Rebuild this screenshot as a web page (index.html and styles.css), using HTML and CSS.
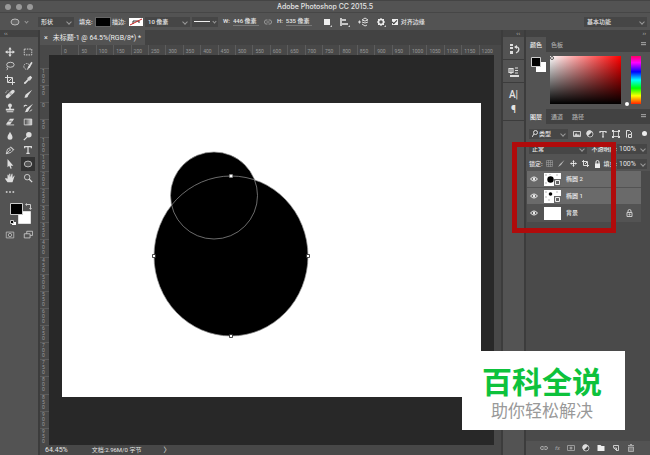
FILE: index.html
```
<!DOCTYPE html>
<html lang="zh-CN">
<head>
<meta charset="utf-8">
<meta name="viewport" content="width=device-width, initial-scale=1">
<title>Adobe Photoshop CC 2015.5</title>
<link rel="stylesheet" href="styles.css">
</head>
<body>

<header class="titlebar">
  <div class="lights"><i></i><i></i><i></i></div>
  <h1>Adobe Photoshop CC 2015.5</h1>
</header>

<div class="options">
  <button class="shape-btn" aria-label="椭圆工具">
    <svg width="10" height="8" viewBox="0 0 10 8"><ellipse cx="5" cy="4" rx="4" ry="3" fill="#666" stroke="#bbb"/></svg>
    <span class="chev"></span>
  </button>
  <span class="pick mode"><select aria-label="模式"><option>形状</option></select></span>
  <span class="opt-label fill-label">填充:</span>
  <button class="swatch black" aria-label="填充颜色"></button>
  <span class="opt-label stroke-label">描边:</span>
  <button class="swatch none" aria-label="描边颜色">
    <svg width="14" height="8" viewBox="0 0 14 8"><path d="M4 6V3h6v2" fill="none" stroke="#333"/><path d="M1 7 13 1" stroke="#c22"/></svg>
  </button>
  <span class="pick size"><select aria-label="描边宽度"><option>10 像素</option></select></span>
  <button class="line-btn" aria-label="描边类型"><i></i><span class="chev"></span></button>
  <label class="dim">W: <input type="text" value="446 像素"></label>
  <svg class="chain" width="8" height="6" viewBox="0 0 8 6"><path d="M3.500 1H2a1.500 2 0 0 0 0 4h1.500M4.500 1H6a1.500 2 0 0 1 0 4H4.500M2.500 3h3" fill="none" stroke="#999"/></svg>
  <label class="dim">H: <input type="text" value="535 像素"></label>
  <div class="ops">
    <button aria-label="路径操作"><svg width="10" height="10" viewBox="0 0 10 10"><path d="M2 2h6v6H2z" fill="#eee"/><path d="M10 8v2H8z" fill="#ccc"/></svg></button>
    <button aria-label="路径对齐"><svg width="10" height="10" viewBox="0 0 10 10"><path d="M1 1v8M2 3h4M2 7h6" fill="none" stroke="#eee" stroke-width="1.500"/><path d="M10 8v2H8z" fill="#ccc"/></svg></button>
    <button aria-label="路径排列"><svg width="10" height="10" viewBox="0 0 10 10"><path d="M0 5h3M1.500 3.500v3M4 3l3-2 3 2-3 1zM4 5l3 1 3-1M4 7l3 2 2-1" fill="none" stroke="#ddd"/></svg></button>
    <button aria-label="设置"><svg width="10" height="10" viewBox="0 0 10 10"><circle cx="5" cy="5" r="2.500" fill="none" stroke="#eee" stroke-width="1.500"/><path d="M5 1v1M5 8v1M1 5h1M8 5h1M2 2l1 1M7 7l1 1M8 2 7 3M2 8l1-1" stroke="#eee"/><path d="M10 8v2H8z" fill="#ccc"/></svg></button>
  </div>
  <label class="check"><input type="checkbox" checked> 对齐边缘</label>
  <span class="pick workspace-pick"><select aria-label="工作区"><option>基本功能</option></select></span>
</div>

<div class="main">
  <aside class="tools">
    <div class="strip">‹‹</div>
    <div class="tool-grid">
      <button aria-label="移动"><svg viewBox="0 0 12 12"><path d="M6 2v8M2 6h8" stroke="#ddd" stroke-width="1.500"/><path d="M6 0l2 3H4zM6 12l2-3H4zM0 6l3-2v4zM12 6L9 4v4z" fill="#ddd"/></svg></button>
      <button aria-label="矩形选框"><svg viewBox="0 0 12 12"><path d="M1.500 2.500h9v7h-9z" fill="none" stroke="#ddd" stroke-dasharray="2 1"/></svg></button>
      <button aria-label="套索"><svg viewBox="0 0 12 12"><ellipse cx="6.500" cy="4.500" rx="4.500" ry="3" fill="none" stroke="#ddd"/><path d="M3 6.500c-2 1 0 2 0 2s0 2-1 2.500" fill="none" stroke="#ddd"/></svg></button>
      <button aria-label="快速选择"><svg viewBox="0 0 12 12"><circle cx="4.500" cy="6.500" r="3.500" fill="none" stroke="#ddd" stroke-dasharray="2 1"/><path d="M11.500 2 8 8l-3 2 1-3 4-6z" fill="#ddd"/></svg></button>
      <button aria-label="裁剪"><svg viewBox="0 0 12 12"><path d="M3 0v9h9M0 3h9v9M4 8l4-4" fill="none" stroke="#ddd" stroke-width="1.200"/></svg></button>
      <button aria-label="吸管"><svg viewBox="0 0 12 12"><path d="M7 5 2 10" stroke="#ddd" stroke-width="2"/><path d="M6 3l3 3 2-3-2-2zM1 11l1-3 1 2z" fill="#ddd"/><path d="M5.500 3.500l3 3" stroke="#ddd" stroke-width="1.500"/></svg></button>
      <button aria-label="修复画笔"><svg viewBox="0 0 12 12"><path d="M3 9 9.500 3" stroke="#ddd" stroke-width="4" stroke-linecap="round"/><path d="M4.500 5 8 8M5.500 4 9 7" stroke="#555" stroke-width=".6"/><path d="M1 5c0-2 1-3 3-3" fill="none" stroke="#ddd" stroke-dasharray="1 1"/></svg></button>
      <button aria-label="画笔"><svg viewBox="0 0 12 12"><path d="M11 1 6 8 4 6zM4 6l2 2c0 2-2 3-5 2 2 0 1-3 3-4z" fill="#ddd"/></svg></button>
      <button aria-label="仿制图章"><svg viewBox="0 0 12 12"><circle cx="6" cy="3" r="2.300" fill="#ddd"/><path d="M5 4h2v3h4v2H1V7h4zM2 10h8v1H2z" fill="#ddd"/></svg></button>
      <button aria-label="历史记录画笔"><svg viewBox="0 0 12 12"><path d="M12 1 7 8 5 6zM5 6l2 2c0 2-2 3-5 3 2-1 1-4 3-5z" fill="#ddd"/><path d="M1 3h4M1 5l2-3M8 10l3-2" fill="none" stroke="#ddd"/></svg></button>
      <button aria-label="橡皮擦"><svg viewBox="0 0 12 12"><path d="M6 2h5L6 9H1z" fill="#ddd"/><path d="M4 5h4" stroke="#555"/><path d="M2 9.500h9" stroke="#ddd"/></svg></button>
      <button aria-label="渐变"><svg viewBox="0 0 12 12"><defs><linearGradient id="ramp"><stop stop-color="#444"/><stop offset="1" stop-color="#ddd"/></linearGradient></defs><path d="M1.500 2.500h9v7h-9z" fill="url(#ramp)" stroke="#ddd"/></svg></button>
      <button aria-label="模糊"><svg viewBox="0 0 12 12"><path d="M6 1c1 3 3 4 3 6.500a3 3 0 0 1-6 0C3 5 5 4 6 1z" fill="#ddd"/></svg></button>
      <button aria-label="减淡"><svg viewBox="0 0 12 12"><circle cx="7" cy="4.500" r="3.300" fill="#ddd"/><path d="M5 7l-4 4" stroke="#ddd" stroke-width="1.500"/></svg></button>
      <button aria-label="钢笔"><svg viewBox="0 0 12 12"><path d="M1.500 10.500 3 5l4-2 3 3-3 3zM1.500 10.500 5.500 6.500M7 2l4 4" fill="none" stroke="#ddd"/><circle cx="6" cy="6" r="1" fill="#ddd"/></svg></button>
      <button aria-label="文字"><svg viewBox="0 0 12 12"><path d="M2 4V2h8v2M6 2v8M4 10h4" fill="none" stroke="#ddd" stroke-width="1.500"/></svg></button>
      <button aria-label="路径选择"><svg viewBox="0 0 12 12"><path d="M3 0v10l2-2 2 4 1-1-1-3h3z" fill="#ddd"/></svg></button>
      <button class="on" aria-label="椭圆"><svg viewBox="0 0 12 12"><ellipse cx="6" cy="6" rx="4.500" ry="3.500" fill="#555" stroke="#ccc"/></svg></button>
      <button aria-label="抓手"><svg viewBox="0 0 12 12"><path d="M3 11 0 7l1-1 2 1V2h1.300l.7 3V1h1.300l.2 4L8 1h1v5l2-3 .5.500L10 8l-1 3z" fill="#ddd"/></svg></button>
      <button aria-label="缩放"><svg viewBox="0 0 12 12"><circle cx="5" cy="5" r="3.300" fill="none" stroke="#ddd"/><path d="M7.500 7.500 11 11" stroke="#ddd" stroke-width="1.500"/></svg></button>
      <button aria-label="更多"><svg viewBox="0 0 12 12"><path d="M1 5h2v2H1zM5 5h2v2H5zM9 5h2v2H9z" fill="#ddd"/></svg></button>
    </div>
    <svg class="fgbg" width="26" height="26" viewBox="0 0 26 26">
      <path d="M10.500 9.500h12v12h-12z" fill="#fff" stroke="#ddd"/>
      <path d="M2.500 1.500h12v11h-12z" fill="#000" stroke="#ccc"/>
      <path d="M19 2.500h3.500V6" fill="none" stroke="#ccc"/><path d="M19 1v3l-2-1.500zM21 6h3l-1.500 2z" fill="#ccc"/>
      <path d="M4 20h4v3H4z" fill="#fff"/><path d="M2.500 18.500h3v3h-3z" fill="#000" stroke="#ccc"/>
    </svg>
    <div class="tool-grid">
      <button aria-label="快速蒙版"><svg viewBox="0 0 12 12"><path d="M1.500 2.500h9v7h-9z" fill="none" stroke="#bbb"/><circle cx="6" cy="6" r="2" fill="none" stroke="#bbb"/></svg></button>
      <button aria-label="屏幕模式"><svg viewBox="0 0 12 12"><path d="M4.500 1.500h7v5h-7z" fill="none" stroke="#ccc"/><path d="M1.500 4.500h7v5h-7z" fill="#535353" stroke="#ccc"/></svg></button>
    </div>
  </aside>

  <section class="document">
    <div class="tabs doc-tabs">
      <button class="on"><span class="close">×</span>未标题-1 @ 64.5%(RGB/8*) *</button>
    </div>
    <div class="ruler-x" id="rulerX"></div>
    <div class="stage">
      <div class="ruler-y" id="rulerY"></div>
      <div class="canvas">
        <svg viewBox="0 0 419 294" preserveAspectRatio="none">
          <rect width="419" height="294" fill="#fff"/>
          <circle cx="152" cy="92.500" r="43.500"/>
          <ellipse cx="169" cy="153" rx="77" ry="80"/>
          <g fill="none" stroke="#999" stroke-width=".7">
            <circle cx="152" cy="92.500" r="43.500"/>
            <ellipse cx="169" cy="153" rx="77" ry="80"/>
          </g>
          <path d="M167.500 71.500h3v3h-3z" fill="#fff" stroke="#888" stroke-width=".5"/>
          <g fill="#fff" stroke="#222" stroke-width=".8"><path d="M90.500 151.500h3v3h-3zM244.500 151.500h3v3h-3zM167.500 231.500h3v3h-3z"/></g>
        </svg>
      </div>
      <div class="scroll"></div>
    </div>
    <footer class="status"><span>64.45%</span><span class="doc-size">文档:2.96M/0 字节</span><span>〉</span></footer>
  </section>

  <aside class="dock">
    <div class="strip right">‹‹</div>
    <div class="dock-group"><button aria-label="历史记录"><svg width="12" height="12" viewBox="0 0 12 12"><path d="M2 1h3v2H2zM2 4h3v2H2zM2 8h3v3H2z" fill="#ddd"/><path d="M7 4h2c3 1 2 5-1 6" fill="none" stroke="#ddd" stroke-width="1.300"/><path d="M9 2v4L6 4z" fill="#ddd"/></svg></button></div>
    <div class="dock-group"><button aria-label="属性"><svg width="12" height="12" viewBox="0 0 12 12"><path d="M1 2.500h4v4H1zM3 2v6M7 2h3M7 4.500h3M7 7h3" fill="none" stroke="#ddd" stroke-width="1.200"/><path d="M2 9h9v2H2z" fill="#ddd"/></svg></button></div>
    <div class="dock-group"><button>A|</button><button>¶</button></div>
  </aside>

  <aside class="panels">
    <div class="strip right">››</div>
    <div class="tabs">
      <button class="on">颜色</button><button>色板</button>
      <span class="menu"></span>
    </div>
    <div class="color">
      <svg width="15" height="17" viewBox="0 0 15 17"><path d="M5 6h10v10H5z" fill="#fff"/><path d="M.5 1.500h9v9h-9z" fill="#000" stroke="#ccc"/></svg>
      <div class="field"><i></i></div>
      <div class="hue"><i></i></div>
    </div>
    <div class="tabs">
      <button class="on">图层</button><button>通道</button><button>路径</button>
      <span class="menu"></span>
    </div>
    <div class="layers">
      <div class="row filter">
        <span class="pick kind">
          <svg width="6" height="7" viewBox="0 0 6 7"><circle cx="3.500" cy="2.500" r="2" fill="none" stroke="#ddd"/><path d="M2 4 0 7" stroke="#ddd"/></svg>
          <select aria-label="筛选"><option>类型</option></select>
        </span>
        <button aria-label="像素"><svg width="8" height="8" viewBox="0 0 8 8"><path d="M.5 1.500h7v5h-7z" fill="none" stroke="#ccc"/><path d="M1 6l2-3 2 2 1-1 1 2z" fill="#ccc"/></svg></button>
        <button aria-label="调整"><svg width="8" height="8" viewBox="0 0 8 8"><circle cx="4" cy="4" r="3" fill="#444" stroke="#ddd" stroke-width=".8"/><path d="M2 6a3 3 0 1 1 4-4z" fill="#ddd"/></svg></button>
        <button aria-label="文字"><svg width="8" height="8" viewBox="0 0 8 8"><path d="M1 3V1.500h6V3M4 1v6M3 7h2" fill="none" stroke="#ddd" stroke-width="1.200"/></svg></button>
        <button aria-label="形状"><svg width="8" height="8" viewBox="0 0 8 8"><path d="M1.500 1.500h5v5h-5z" fill="none" stroke="#ccc"/><path d="M0 0h2v2H0zM6 0h2v2H6zM0 6h2v2H0zM6 6h2v2H6z" fill="#ddd"/></svg></button>
        <button aria-label="智能对象"><svg width="8" height="8" viewBox="0 0 8 8"><path d="M1.500 7.500v-7h3l2 2v2" fill="none" stroke="#ddd"/><path d="M3.500 4.500h3v3h-3z" fill="#555" stroke="#ddd"/></svg></button>
        <i class="dot"></i>
      </div>
      <div class="row">
        <span class="pick blend"><select aria-label="混合模式"><option>正常</option></select></span>
        <label class="percent" for="opacity">不透明度:</label>
        <span class="pick num"><select id="opacity"><option>100%</option></select></span>
      </div>
      <div class="row">
        <span class="lock-label">锁定:</span>
        <div class="locks">
          <button aria-label="锁定透明像素"><svg width="7" height="7" viewBox="0 0 7 7"><path d="M.5.500h6v6h-6zM2.500 0v7M4.500 0v7M0 2.500h7M0 4.500h7" fill="none" stroke="#999" stroke-width=".6"/></svg></button>
          <button aria-label="锁定图像像素"><svg width="7" height="7" viewBox="0 0 7 7"><path d="M6.500 0 3 5 2 4zM2 4l1 1-3 2z" fill="#bbb"/></svg></button>
          <button aria-label="锁定位置"><svg width="7" height="7" viewBox="0 0 12 12"><path d="M6 2v8M2 6h8" stroke="#eee" stroke-width="1.500"/><path d="M6 0l2 3H4zM6 12l2-3H4zM0 6l3-2v4zM12 6L9 4v4z" fill="#eee"/></svg></button>
          <button aria-label="锁定画板"><svg width="7" height="7" viewBox="0 0 7 7"><path d="M0 1.500h5.500V7M1.500 0v5.500H7M3 4l2-2" fill="none" stroke="#ddd"/></svg></button>
          <button aria-label="全部锁定"><svg width="7" height="8" viewBox="0 0 7 8"><path d="M2 4V2a1.500 1.500 0 0 1 3 0v2" fill="none" stroke="#eee"/><path d="M1 3.500h5V8H1z" fill="#eee"/></svg></button>
        </div>
        <label class="percent" for="fill">填充:</label>
        <span class="pick num"><select id="fill"><option>100%</option></select></span>
      </div>
      <ul class="list">
        <li class="on">
          <button class="eye" aria-label="显示"><svg width="8" height="6" viewBox="0 0 8 6"><path d="M.5 3q3.500-4 7 0-3.500 4-7 0z" fill="none" stroke="#eee"/><circle cx="4" cy="3" r="1.200" fill="#eee"/></svg></button>
          <svg class="thumb" width="17" height="13" viewBox="0 0 17 13"><rect width="17" height="13" fill="#fff"/><path d="M1 1h2v2H1zM5 1h2v1H5zM1 9h2v2H1zM12 1h2v2h-2z" fill="#ddd"/><circle cx="6.500" cy="6.500" r="3.200"/><path d="M10 6h7v7h-7z" fill="#666"/><path d="M11.500 7.500h4v4h-4z" fill="none" stroke="#eee"/></svg>
          <span>椭圆 2</span>
        </li>
        <li class="on">
          <button class="eye" aria-label="显示"><svg width="8" height="6" viewBox="0 0 8 6"><path d="M.5 3q3.500-4 7 0-3.500 4-7 0z" fill="none" stroke="#eee"/><circle cx="4" cy="3" r="1.200" fill="#eee"/></svg></button>
          <svg class="thumb" width="17" height="13" viewBox="0 0 17 13"><rect width="17" height="13" fill="#fff"/><path d="M1 1h2v2H1zM1 6h2v2H1zM4 9h2v2H4zM12 1h2v2h-2z" fill="#ddd"/><circle cx="6.500" cy="4" r="1.800"/><path d="M10 6h7v7h-7z" fill="#666"/><path d="M11.500 7.500h4v4h-4z" fill="none" stroke="#eee"/></svg>
          <span>椭圆 1</span>
        </li>
        <li>
          <button class="eye" aria-label="显示"><svg width="8" height="6" viewBox="0 0 8 6"><path d="M.5 3q3.500-4 7 0-3.500 4-7 0z" fill="none" stroke="#eee"/><circle cx="4" cy="3" r="1.200" fill="#eee"/></svg></button>
          <svg class="thumb" width="17" height="13" viewBox="0 0 17 13"><rect width="17" height="13" fill="#fff"/></svg>
          <span>背景</span>
          <svg class="locked" width="7" height="8" viewBox="0 0 7 8"><path d="M2 3V2a1.500 1.500 0 0 1 3 0v1M1 3.500h5v4H1zM3 5h1v1H3z" fill="none" stroke="#ccc"/></svg>
        </li>
      </ul>
      <div class="actions">
        <button aria-label="链接图层"><svg width="8" height="8" viewBox="0 0 8 8"><path d="M3.500 2.500H2a1.500 1.500 0 0 0 0 3h1.500M4.500 2.500H6a1.500 1.500 0 0 1 0 3H4.500M2.500 4h3" fill="none" stroke="#bbb" stroke-width=".8"/></svg></button>
        <button class="fx">fx</button>
        <button aria-label="蒙版"><svg width="8" height="8" viewBox="0 0 8 8"><path d="M.5 1.500h7v5h-7z" fill="none" stroke="#999"/><circle cx="4" cy="4" r="1.500" fill="#999"/></svg></button>
        <button aria-label="调整图层"><svg width="8" height="8" viewBox="0 0 8 8"><circle cx="4" cy="4" r="3" fill="#444" stroke="#ddd" stroke-width=".8"/><path d="M2 6a3 3 0 1 1 4-4z" fill="#ddd"/></svg></button>
        <button aria-label="新建组"><svg width="8" height="8" viewBox="0 0 8 8"><path d="M.500 1h3l1 1h3v5h-7z" fill="#eee"/></svg></button>
        <button aria-label="新建图层"><svg width="8" height="8" viewBox="0 0 8 8"><path d="M1.500 1.500h5v5h-2l-3-3zM1.500 4h3v3" fill="none" stroke="#ccc"/></svg></button>
        <button aria-label="删除"><svg width="8" height="8" viewBox="0 0 8 8"><path d="M1 1.500h6M3 .5h2M1.500 3h5v4.500h-5zM3 3v4M5 3v4" fill="none" stroke="#bbb" stroke-width=".8"/></svg></button>
      </div>
    </div>
  </aside>
</div>

<div class="highlight"></div>
<div class="banner">
  <strong>百科全说</strong>
  <span>助你轻松解决</span>
</div>

<script src="rulers.js"></script>
</body>
</html>
```
FILE: styles.css
```
* {
  box-sizing: border-box;
}

body {
  margin: 0;
  height: 100vh;
  display: flex;
  flex-direction: column;
  overflow: hidden;
  position: relative;
  background: #535353;
  color: #e4e4e4;
  font: 500 6px/8px Roboto, "Noto Sans CJK SC", sans-serif;
}

button, select, input {
  margin: 0;
  padding: 0;
  border: 0;
  border-radius: 0;
  background: none;
  color: inherit;
  font: inherit;
  appearance: none;
}

svg {
  display: block;
}

/* title bar */
.titlebar {
  height: 13px;
  display: grid;
  grid-template-columns: 1fr auto 1fr;
  align-items: center;
  padding: 0 5px;
  border-top: 1px solid #444;
  border-bottom: 1px solid #464646;
}

.titlebar h1 {
  margin: 0;
  font-family: Inter, sans-serif;
  font-size: 7px;
  line-height: 10px;
  font-weight: 500;
}

.lights {
  display: flex;
  gap: 5px;
}

.lights i {
  width: 6px;
  height: 6px;
  border-radius: 50%;
  background: #999;
}

/* options bar */
.options {
  height: 17px;
  display: flex;
  align-items: center;
  padding: 0 3px 0 10px;
}

.shape-btn, .line-btn {
  display: flex;
  align-items: center;
  gap: 5px;
}

.shape-btn {
  width: 28px;
}

.chev, .pick::after {
  content: "";
  flex: none;
  width: 3px;
  height: 3px;
  border: solid #999;
  border-width: 0 1px 1px 0;
  rotate: 45deg;
}

.pick {
  display: flex;
  align-items: center;
  height: 10px;
  padding: 0 3px;
  background: #464646;
}

.pick select {
  flex: 1;
  min-width: 0;
}

.mode {
  width: 36px;
}

.opt-label {
  width: 17px;
  margin-left: 5px;
}

.stroke-label {
  margin-left: 2px;
}

.swatch {
  width: 14px;
  height: 8px;
  background: #fff;
}

.swatch.black {
  background: #000;
  outline: 1px solid #666;
}

.size {
  width: 45px;
  margin-left: 2px;
}

.line-btn {
  width: 26px;
  height: 10px;
  margin-left: 2px;
  padding: 0 2px;
  gap: 3px;
  background: #464646;
}

.line-btn i {
  flex: 1;
  height: 1px;
  background: #eee;
}

.dim {
  display: flex;
  gap: 3px;
  margin-left: 5px;
}

.dim input {
  width: 26px;
  border-bottom: 1px solid #777;
}

.chain {
  margin-left: 5px;
}

.ops {
  display: flex;
  gap: 8px;
  margin: 0 6px 0 10px;
}

.check {
  display: flex;
  align-items: center;
  gap: 3px;
}

.check input {
  width: 6px;
  height: 6px;
  background: #eee;
  display: grid;
  place-items: center;
}

.check input:checked::after {
  content: "";
  width: 2px;
  height: 4px;
  border: solid #333;
  border-width: 0 1px 1px 0;
  rotate: 45deg;
}

.workspace-pick {
  width: 63px;
  margin-left: auto;
}

/* columns */
.main {
  flex: 1;
  min-height: 0;
  display: flex;
  background: #3c3c3c;
  gap: 2px;
}

.strip {
  height: 7px;
  padding: 0 4px;
  background: #424242;
  color: #aaa;
  line-height: 6px;
}

.strip.right {
  text-align: right;
}

.tools {
  width: 38px;
  background: #535353;
}

.tool-grid {
  display: grid;
  grid-template-columns: 14px 14px;
  grid-auto-rows: 14px;
  column-gap: 4px;
  padding: 8px 0 0 3px;
}

.tool-grid button {
  display: grid;
  place-items: center;
}

.tool-grid button.on {
  background: #333;
}

.tool-grid svg {
  width: 10px;
  height: 10px;
}

.fgbg {
  margin: 3px 0 0 8px;
}

.fgbg + .tool-grid {
  padding-top: 0;
}

.tabs {
  display: flex;
  align-items: stretch;
  height: 15px;
  background: #424242;
}

.tabs button {
  padding: 0 4px;
  margin-right: 1px;
  color: #aaa;
}

.tabs button.on {
  background: #535353;
  color: #eee;
}

.menu {
  width: 5px;
  height: 4px;
  margin: 5px 4px 0 auto;
  background: repeating-linear-gradient(#999 0 1px, #535353 1px 2px);
}

/* document */
.document {
  flex: 1;
  min-width: 0;
  display: flex;
  flex-direction: column;
}

.doc-tabs button {
  font-size: 7px;
  font-weight: 400;
}

.close {
  margin-right: 5px;
}

.ruler-x {
  height: 10px;
  display: grid;
  grid-auto-flow: column;
  grid-auto-columns: 1fr;
  padding: 0 5px 0 21px;
  background: #484848;
  font-size: 5px;
  font-weight: 400;
  line-height: 12px;
  color: #999;
}

.ruler-x span {
  border-left: 1px solid #5c5c5c;
  padding-left: 2px;
  min-width: 0;
}

.stage {
  flex: 1;
  min-height: 0;
  display: flex;
}

.ruler-y {
  width: 9px;
  display: grid;
  grid-auto-rows: 1fr;
  padding-top: 13px;
  background: #484848;
  overflow: hidden;
  font-size: 5px;
  font-weight: 400;
  line-height: 5px;
  color: #999;
}

.ruler-y span {
  border-top: 1px solid #5c5c5c;
  padding: 0 4px 0 2px;
  min-height: 0;
  overflow: hidden;
  word-break: break-all;
}

.canvas {
  flex: 1;
  min-width: 0;
  padding: 48px 13px;
  background: #282828;
}

.canvas svg {
  width: 100%;
  height: 100%;
}

.scroll {
  width: 7px;
  background: #484848;
}

.status {
  height: 10px;
  display: flex;
  align-items: center;
  padding-left: 5px;
  background: #484848;
  font-size: 7px;
  font-weight: 400;
}

.doc-size {
  margin: 0 22px 0 24px;
  font-size: 6px;
}

/* right hand side */
.dock {
  width: 21px;
  background: #535353;
}

.dock-group {
  display: grid;
  justify-items: center;
  gap: 3px;
  padding: 6px 0 4px;
  border-bottom: 1px solid #3c3c3c;
}

.dock-group button {
  font-size: 10px;
  line-height: 12px;
}

.panels {
  width: 124px;
  display: flex;
  flex-direction: column;
  background: #535353;
}

.color {
  display: flex;
  height: 57px;
  padding: 4px 9px 5px 5px;
}

.field {
  flex: 1;
  margin: 0 10px 0 4px;
  background: linear-gradient(transparent, #000), linear-gradient(to right, #fff, #f00);
}

.field i {
  display: block;
  width: 4px;
  height: 4px;
  border: 1px solid #555;
  border-radius: 50%;
}

.hue {
  position: relative;
  width: 10px;
  background: linear-gradient(#f06, #f0f 14%, #00f 33%, #0ff 50%, #0f0 67%, #ff0 83%, #f20);
}

.hue i {
  position: absolute;
  left: -6px;
  bottom: -2px;
  width: 4px;
  height: 4px;
  border-radius: 50%;
  background: #fff;
}

.layers {
  flex: 1;
  display: flex;
  flex-direction: column;
  padding-top: 2px;
}

.row {
  display: flex;
  align-items: center;
  height: 15px;
  padding: 0 3px;
}

.filter {
  gap: 5px;
}

.kind {
  width: 39px;
  gap: 1px;
}

.dot {
  width: 5px;
  height: 5px;
  margin-left: auto;
  border-radius: 50%;
  background: #eee;
}

.blend {
  width: 58px;
}

.percent {
  margin-left: auto;
}

.num {
  width: 30px;
  padding: 0 2px;
}

.num select {
  font-size: 7px;
  font-weight: 400;
}

.locks {
  display: flex;
  gap: 5px;
  margin-left: 3px;
}

.list {
  flex: 1;
  margin: 0;
  padding: 0 9px 0 1px;
  list-style: none;
  background: #4a4a4a;
}

.list li {
  display: flex;
  align-items: center;
  height: 17px;
  padding: 0 8px 0 3px;
  border-bottom: 1px solid #535353;
  background: #535353;
}

.list li.on {
  background: #6a6a6a;
}

.thumb {
  margin: 0 5px 0 6px;
}

.locked {
  margin-left: auto;
}

.actions {
  display: flex;
  justify-content: space-between;
  align-items: center;
  height: 14px;
  padding: 0 15px 0 14px;
}

.fx {
  font-style: italic;
  color: #999;
}

/* overlays */
.highlight {
  position: absolute;
  left: 512px;
  top: 142px;
  width: 104px;
  height: 91px;
  border: 5px solid #b00b0b;
}

.banner {
  position: absolute;
  right: 25px;
  bottom: 25px;
  display: grid;
  justify-items: center;
  padding: 14px 23px 8px 20px;
  background: #fff;
  color: #999;
  font-size: 17px;
  font-weight: 400;
  line-height: 21px;
}

.banner strong {
  color: #0dc23c;
  font-size: 30px;
  line-height: 36px;
  font-weight: 700;
}
```
FILE: rulers.js
```
const rulerX = document.getElementById('rulerX');
const rulerY = document.getElementById('rulerY');

function addMarks(ruler, from, to) {
  for (let n = from; n <= to; n += 50) {
    const mark = document.createElement('span');
    mark.textContent = Math.abs(n);
    ruler.appendChild(mark);
  }
}

addMarks(rulerX, 0, 1200);
addMarks(rulerY, -100, 950);
```
